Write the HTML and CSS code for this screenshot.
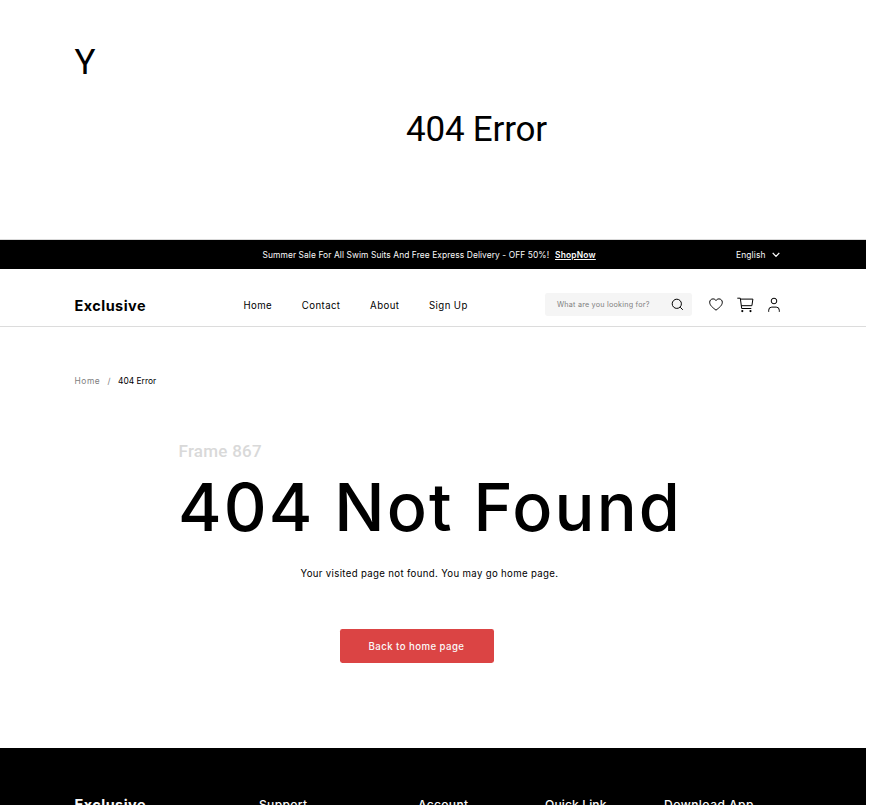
FILE: index.html
```
<!DOCTYPE html>
<html lang="en">
<head>
<meta charset="utf-8">
<title>404 Error - Exclusive</title>
<link rel="stylesheet" href="styles.css">
</head>
<body>
<div class="intro">
  <div class="mark">Y</div>
  <div class="page-name">404 Error</div>
</div>
<div class="page">
  <div class="promo">
    <p class="sale">Summer Sale For All Swim Suits And Free Express Delivery - OFF 50%!</p>
    <a class="shop">ShopNow</a>
    <div class="language"><span>English</span>
      <svg width="8" height="6" viewBox="0 0 8 6"><path d="M.7.9 4 4.4 7.3.9"/></svg>
    </div>
  </div>
  <header class="header">
    <div class="logo">Exclusive</div>
    <nav class="nav"><a>Home</a><a>Contact</a><a>About</a><a>Sign Up</a></nav>
    <div class="search"><span>What are you looking for?</span>
      <svg width="13" height="13" viewBox="0 0 13 13"><circle cx="5.8" cy="5.8" r="4.6"/><path d="m9.2 9.2 2.6 2.6"/></svg>
    </div>
    <div class="actions">
      <svg class="heart" width="14" height="13" viewBox="0 0 14 13"><path d="M4 .9C2.100.9.7 2.400.7 4.200c0 3.300 3 5.300 6.300 8 3.300-2.700 6.300-4.700 6.300-8C13.300 2.400 11.900.9 10 .9 8.700.9 7.600 1.500 7 2.500 6.400 1.500 5.300.9 4 .9Z"/></svg>
      <svg class="cart" width="17" height="16" viewBox="0 0 17 16"><path d="M.3 1.200h3l1.400 10.300h9.600M3.500 2.100h12.400l-1 6.600H4.400"/><circle class="wheel" cx="5.300" cy="14.100" r="1.100"/><circle class="wheel" cx="13.500" cy="14.100" r="1.100"/></svg>
      <svg class="user" width="12" height="16" viewBox="0 0 12 16"><circle cx="6" cy="4" r="2.800"/><path d="M.7 14.800v-1.600a3.100 3.100 0 0 1 3.100-3.100h4.400a3.100 3.100 0 0 1 3.100 3.100v1.600"/></svg>
    </div>
  </header>
  <main class="content">
    <div class="breadcrumb"><a>Home</a><span class="slash">/</span><span class="current">404 Error</span></div>
    <div class="frame-label">Frame 867</div>
    <h1>404 Not Found</h1>
    <p class="message">Your visited page not found. You may go home page.</p>
    <a class="button">Back to home page</a>
  </main>
  <footer class="footer">
    <div class="logo">Exclusive</div>
    <div class="support">Support</div>
    <div class="account">Account</div>
    <div class="quick">Quick Link</div>
    <div class="download">Download App</div>
  </footer>
</div>
</body>
</html>
```
FILE: styles.css
```
* { box-sizing: border-box; }
body {
  margin: 0;
  height: 805px;
  overflow: hidden;
  background: #fff;
  color: #000;
  font-family: Inter, "Liberation Sans", sans-serif;
  white-space: nowrap;
}
h1, p { margin: 0; font-weight: 400; }
svg { display: block; flex: none; fill: none; stroke: currentColor; }

.intro {
  height: 239px;
  padding: 43px 0 0 74.500px;
  font: 35px/40px Roboto, sans-serif;
}
.page-name { margin: 27px 0 0 331.500px; letter-spacing: -.220px; }

.page { width: 866px; }

.promo {
  display: flex;
  height: 30px;
  padding: 1px 0 0 262.500px;
  border-top: 1px solid #d9d9d9;
  background: #000;
  color: #fafafa;
  font-size: 8.420px;
  line-height: 29px;
}
.sale { width: 292.500px; letter-spacing: .080px; }
.shop {
  width: 181px;
  font-weight: 600;
  letter-spacing: .200px;
  text-decoration: underline;
}
.language { display: flex; letter-spacing: .150px; line-height: 28px; }
.language span { width: 36px; }
.language svg { margin-top: 11px; stroke-width: 1.300; }

.header {
  display: flex;
  height: 58px;
  padding: 24px 0 0 74.500px;
  border-bottom: 1px solid #dcdcdc;
}
.logo {
  width: 169px;
  font-size: 14.430px;
  font-weight: 700;
  letter-spacing: .480px;
  line-height: 25px;
}
.nav {
  display: flex;
  gap: 29.700px;
  width: 301px;
  font-size: 9.620px;
  line-height: 25px;
  letter-spacing: .420px;
}
.search {
  display: flex;
  justify-content: space-between;
  width: 147.500px;
  height: 23px;
  padding: 0 8px 0 12.500px;
  border-radius: 2.400px;
  background: #f5f5f5;
  font-size: 7.220px;
  line-height: 24px;
  letter-spacing: .210px;
}
.search span { color: #808080; }
.search svg { margin-top: 5px; }
.actions { display: flex; padding-left: 17px; }
.heart { margin: 5px 14px 0 0; }
.cart { margin: 4px 14px 0 0; }
.user { margin-top: 4px; }
.wheel { fill: currentColor; stroke: none; }

.content { height: 421px; padding-top: 44px; }
.breadcrumb {
  display: flex;
  padding-left: 74.500px;
  font-size: 8.420px;
  line-height: 20px;
}
.breadcrumb a { width: 33px; color: #808080; letter-spacing: .550px; }
.slash { width: 10.500px; color: #808080; }
.frame-label {
  margin: 50px 0 0 178.500px;
  color: #d9d9d9;
  font: 500 17px/20px Roboto, sans-serif;
  letter-spacing: .250px;
}
h1 {
  margin: 11px 0 0 178px;
  font-size: 66.500px;
  font-weight: 500;
  letter-spacing: 2.090px;
  line-height: 70px;
}
.message {
  margin: 22px 0 0 300.500px;
  font-size: 9.620px;
  line-height: 20px;
  letter-spacing: .350px;
}
.button {
  display: block;
  width: 154px;
  margin: 45px 0 0 339.500px;
  border-radius: 2.400px;
  background: #db4444;
  color: #fafafa;
  font-size: 9.620px;
  font-weight: 500;
  height: 34px;
  line-height: 35px;
  letter-spacing: .450px;
  text-align: center;
}

.footer {
  display: flex;
  height: 57px;
  padding: 44px 0 0 74.500px;
  overflow: hidden;
  background: #000;
  color: #fafafa;
  font-size: 12.030px;
  font-weight: 500;
  line-height: 26px;
  letter-spacing: .330px;
}
.footer .logo { width: 184.500px; line-height: 25px; }
.support { width: 159px; }
.account { width: 127px; }
.quick { width: 119px; letter-spacing: .150px; }
.download { letter-spacing: .480px; }
```
